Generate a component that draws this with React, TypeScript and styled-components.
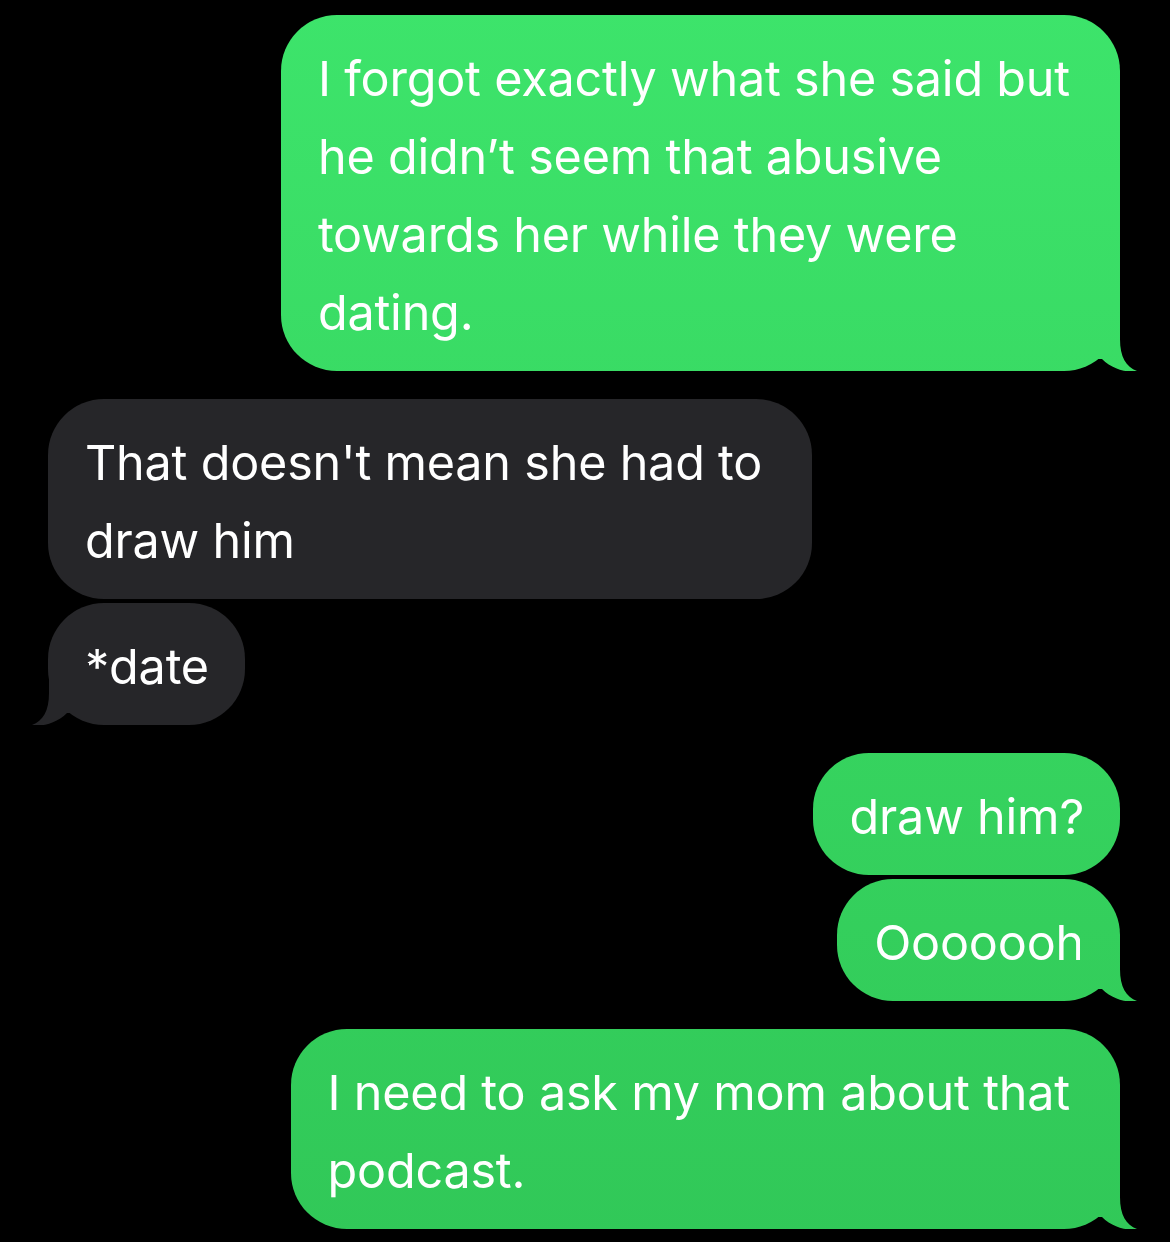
import styled, { createGlobalStyle, css } from 'styled-components';

type Msg = { id: number, text: string, mine: boolean, tail?: boolean, wide?: boolean }

const GlobalStyle = createGlobalStyle`
  html, body { margin: 0; padding: 0; background: #000; }
  body { font-family: Inter, "Noto Sans", sans-serif; }
`

const Page = styled.div`
  width: 1170px;
  height: 1242px;
  background: #000;
  overflow: hidden;
  display: flex;
  flex-direction: column;
  gap: 28px;
  padding-top: 15px;
  box-sizing: border-box;
`

const Group = styled.div<{ $mine: boolean }>`
  display: flex;
  flex-direction: column;
  gap: 4px;
  align-items: ${p => p.$mine ? 'flex-end' : 'flex-start'};
  padding: ${p => p.$mine ? '0 50px 0 0' : '0 0 0 48px'};
`

const sentBg = css`
  background: linear-gradient(180deg, #3de46b 0px, #36d45f 700px, #31c858 1242px) fixed;
`

// iMessage style tail, cut out of a box that hangs off the bottom corner
const tailShape = `path('M 40 0 L 40 30 C 40 48 46 58 57 62 C 46 64 32 60 22 50 L 0 50 L 0 0 Z')`
const tailShapeLeft = `path('M 17 0 L 17 30 C 17 48 11 58 0 62 C 11 64 25 60 35 50 L 57 50 L 57 0 Z')`

const Bubble = styled.div<{ $mine: boolean, $tail: boolean, $wide: boolean }>`
  position: relative;
  box-sizing: border-box;
  min-height: 122px;
  padding: 25px ${p => p.$wide ? 50 : 36}px 19px 37px;
  border-radius: 56px;
  font-size: 48.5px;
  line-height: 78px;
  letter-spacing: -0.2px;
  color: #fff;
  white-space: pre-line;
  ${p => p.$mine ? sentBg : css`background: #262629;`}

  &::after {
    content: '';
    display: ${p => p.$tail ? 'block' : 'none'};
    position: absolute;
    bottom: 0;
    width: 57px;
    height: 62px;
    ${p => p.$mine ? css`
      right: -17px;
      clip-path: ${tailShape};
      ${sentBg}
    ` : css`
      left: -16px;
      clip-path: ${tailShapeLeft};
      background: #262629;
    `}
  }
`

const groups: Msg[][] = [
  [
    { id: 0, mine: true, tail: true, wide: true, text: 'I forgot exactly what she said but\nhe didn’t seem that abusive\ntowards her while they were\ndating.' },
  ],
  [
    { id: 1, mine: false, wide: true, text: "That doesn't mean she had to\ndraw him" },
    { id: 2, mine: false, tail: true, text: '*date' },
  ],
  [
    { id: 3, mine: true, text: 'draw him?' },
    { id: 4, mine: true, tail: true, text: 'Ooooooh' },
  ],
  [
    { id: 5, mine: true, tail: true, wide: true, text: 'I need to ask my mom about that\npodcast.' },
  ],
]

export default function App() {
  return (
    <>
      <GlobalStyle />
      <Page>
        {groups.map((g, i) => (
          <Group key={i} $mine={g[0].mine}>
            {g.map(m => (
              <Bubble key={m.id} $mine={m.mine} $tail={!!m.tail} $wide={!!m.wide}>
                {m.text}
              </Bubble>
            ))}
          </Group>
        ))}
      </Page>
    </>
  )
}
